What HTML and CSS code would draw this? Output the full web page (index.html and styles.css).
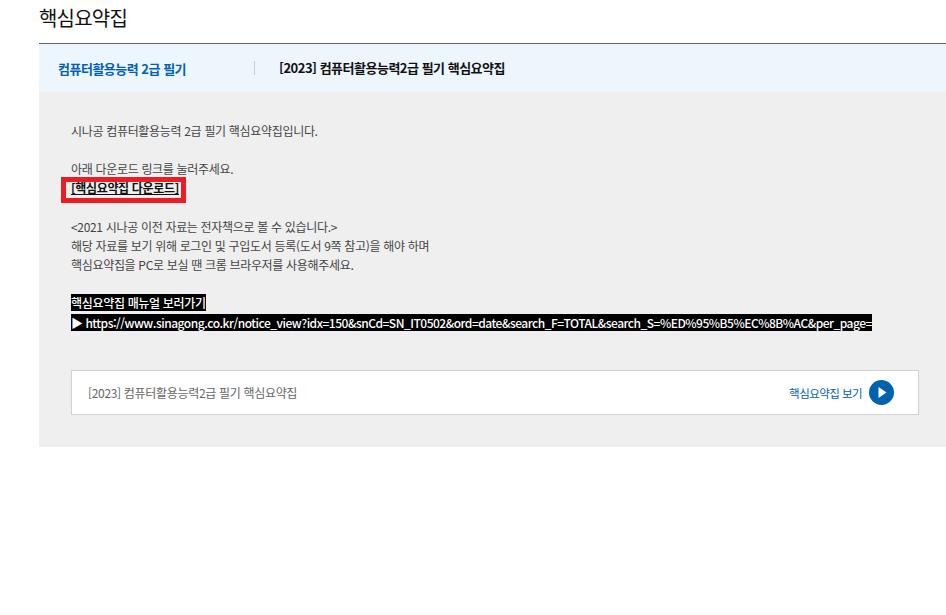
FILE: index.html
```html
<!DOCTYPE html>
<html lang="ko">
<head>
<meta charset="utf-8">
<title>핵심요약집</title>
<link rel="stylesheet" href="styles.css">
</head>
<body>
<main class="page">
  <h1 class="title">핵심요약집</h1>
  <div class="head">
    <div class="cat">컴퓨터활용능력 2급 필기</div>
    <div class="subject">[2023] 컴퓨터활용능력2급 필기 핵심요약집</div>
  </div>
  <section class="body">
    <div class="text">
      <p>시나공 컴퓨터활용능력 2급 필기 핵심요약집입니다.</p>
      <p>&nbsp;</p>
      <p>아래 다운로드 링크를 눌러주세요.</p>
      <p class="dl-line"><a class="dl" href="#">[핵심요약집 다운로드]</a><span class="redbox"></span></p>
      <p class="gap">&nbsp;</p>
      <p>&lt;2021 시나공 이전 자료는 전자책으로 볼 수 있습니다.&gt;</p>
      <p>해당 자료를 보기 위해 로그인 및 구입도서 등록(도서 9쪽 참고)을 해야 하며</p>
      <p>핵심요약집을 PC로 보실 땐 크롬 브라우저를 사용해주세요.</p>
      <p class="gap">&nbsp;</p>
      <p class="inv-line"><span class="inv">핵심요약집 매뉴얼 보러가기</span></p>
      <p class="inv-line url"><span class="inv">▶ https://www.sinagong.co.kr/notice_view?idx=150&amp;snCd=SN_IT0502&amp;ord=date&amp;search_F=TOTAL&amp;search_S=%ED%95%B5%EC%8B%AC&amp;per_page=</span></p>
    </div>
    <div class="card">
      <span class="card-name">[2023] 컴퓨터활용능력2급 필기 핵심요약집</span>
      <a class="card-link" href="#">핵심요약집 보기
        <svg class="play" width="25" height="25" viewBox="0 0 25 25" aria-hidden="true"><circle cx="12.5" cy="12.5" r="12.5" fill="#0062af"/><path d="M9.5 7 L17.5 12.5 L9.5 18 Z" fill="#fff"/></svg>
      </a>
    </div>
  </section>
</main>
</body>
</html>
```
FILE: styles.css
```css
* { box-sizing: border-box; }
html, body { margin: 0; padding: 0; background: #fff; }
body { font-family: "Noto Sans CJK KR", "Noto Sans", sans-serif; color: #444; font-size: 12px; letter-spacing: -0.32px; }
.page { margin-left: 39px; width: 907px; }
.title { margin: 0; height: 43px; padding-top: 4px; font-size: 20px; line-height: 28px; font-weight: 400; color: #111; letter-spacing: -0.8px; }
.head { display: flex; align-items: center; height: 49px; border-top: 1px solid #666; background: #edf5fd; font-size: 13px; font-weight: 700; letter-spacing: -0.5px; }
.cat { width: 215px; padding-left: 19px; color: #0062af; }
.subject { color: #111; padding-left: 24px; border-left: 1px solid #ccc; line-height: 14px; }
.body { background: #efefef; height: 355px; padding: 29px 27px 32px 32px; }
.text p { margin: 0; height: 19px; line-height: 19px; }
.text .gap { height: 20px; }
.text .inv-line { height: 20px; display: flex; align-items: flex-start; }
.url { white-space: nowrap; letter-spacing: -0.49px; }
.dl-line { position: relative; }
.dl { color: #111; font-weight: 700; text-decoration: underline; }
.redbox { position: absolute; left: -10px; top: -1px; width: 125px; height: 26px; border: 5px solid #ed1c24; }
.inv { background: #000; color: #fff; font-weight: 500; display: block; line-height: 17px; }
.card { display: flex; align-items: center; justify-content: space-between; height: 45px; margin-top: 36px; padding: 0 24px 0 16px; background: #fff; border: 1px solid #d2d2d2; }
.card-name { color: #666; }
.card-link { display: flex; align-items: center; gap: 7px; color: #0062af; text-decoration: none; font-size: 11.5px; letter-spacing: -0.55px; }
.play { display: block; }
```
